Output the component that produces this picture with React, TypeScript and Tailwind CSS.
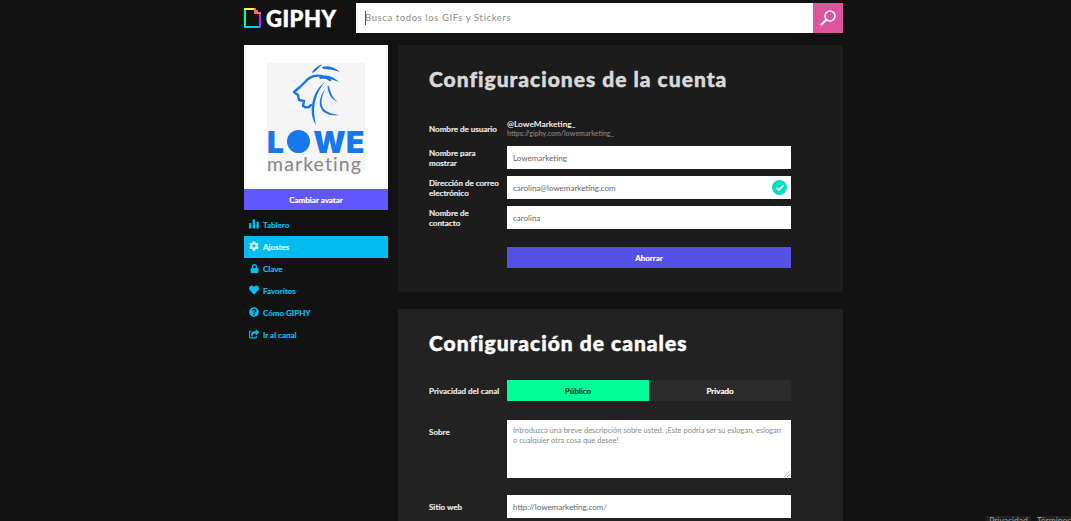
import React from 'react';
import { FaCog, FaLock, FaHeart, FaQuestionCircle, FaShareSquare } from 'react-icons/fa';
import { Check } from 'lucide-react';

const Bars = () => (
  <svg width="11" height="10" viewBox="0 0 11 10" fill="currentColor">
    <rect x="0" y="4" width="2.6" height="6" />
    <rect x="4" y="0" width="2.8" height="10" />
    <rect x="8.2" y="2.5" width="2.6" height="7.5" />
  </svg>
);

const navItems = [
  { label: 'Tablero', icon: <Bars /> },
  { label: 'Ajustes', icon: <FaCog size={10} />, active: true },
  { label: 'Clave', icon: <FaLock size={9} /> },
  { label: 'Favoritos', icon: <FaHeart size={10} /> },
  { label: 'Cómo GIPHY', icon: <FaQuestionCircle size={10} /> },
  { label: 'Ir al canal', icon: <FaShareSquare size={10} /> },
];

const GiphyMark = () => (
  <svg width="17" height="20" viewBox="0 0 17 20" className="shrink-0">
    <path d="M0 0h2v20H0z" fill="#00ff99" />
    <path d="M0 0h10v2H0z" fill="#fff35c" />
    <path d="M0 18h17v2H0z" fill="#00ccff" />
    <path d="M15 6h2v14h-2z" fill="#9933ff" />
    <path d="M10 0h2v2h2v2h3v2h-7z" fill="#ff6666" />
  </svg>
);

// lion head from the avatar: outline plus tapered mane strands
const Lion = () => (
  <svg width="98" height="64" viewBox="0 0 98 64" fill="#1877ec" className="shrink-0">
    <path d="M45 9c3-4 6-6 10-8-2 3-5 6-9 9z" />
    <path d="M55 4c7-2 12 0 18 5-6-2-11-3-17-3z" />
    <path d="M52 14c7-3 14-1 20 5-7-3-12-4-19-3z" />
    <path
      d="M63 17C53 10 44 12 38 19L33 24 27 29 31 32 32 37 37 38 36 43C39 45 42 45 44 42"
      fill="none"
      stroke="#1877ec"
      strokeWidth="2.4"
      strokeLinejoin="round"
      strokeLinecap="round"
    />
    <path d="M58 19c-7 8-10 17-11 27 0 6 1 11 2 16-4-6-5-13-4-19 1-11 6-19 13-24z" />
    <path d="M59 25c-4 7-6 14-3 20 3 4 9 6 16 7-8 1-14-1-17-5-5-7-1-16 4-22z" />
    <path d="M61 22c2 3 2 6 3 8 1 3 3 6 7 9-5-2-8-5-9-9-1-3-2-5-1-8z" />
  </svg>
);

const Row = ({ label, children, top }: { label: string; children: React.ReactNode; top?: boolean }) => (
  <div className={`flex ${top ? 'items-start' : 'items-center'}`}>
    <div className={`w-[78px] pr-[6px] text-[8px] leading-[10px] font-bold text-[#e4e4e4] [-webkit-text-stroke:0.2px] ${top ? 'pt-[7px]' : ''}`}>
      {label}
    </div>
    <div className="w-[284px]">{children}</div>
  </div>
);

const Field = ({ value, check }: { value: string; check?: boolean }) => (
  <div className="h-[23px] bg-white flex items-center justify-between pl-[6px] pr-[4px] text-[8px] text-[#666]">
    <span>{value}</span>
    {check && (
      <span className="w-[15px] h-[15px] rounded-full bg-[#00e0c0] flex items-center justify-center text-white">
        <Check size={10} strokeWidth={4} />
      </span>
    )}
  </div>
);

export default function App() {
  return (
    <div
      className="h-[521px] w-[1071px] overflow-hidden bg-[#121212] relative"
      style={{ fontFamily: 'Lato, "Liberation Sans", sans-serif' }}
    >
      <div className="w-[599px] ml-[244px] flex flex-col">
        <header className="h-[30px] mt-[3px] flex items-center">
          <GiphyMark />
          <span className="ml-[5px] w-[90px] text-[22px] font-black text-white tracking-[0.5px] [-webkit-text-stroke:0.5px]">GIPHY</span>
          <div className="w-[457px] h-[30px] bg-white flex items-center pl-[9px] text-[9.5px] tracking-[0.6px] text-[#8a8a8a] relative">
            <span className="absolute left-[9px] top-[8px] w-px h-[14px] bg-[#555]" />
            Busca todos los GIFs y Stickers
          </div>
          <div className="w-[30px] h-[30px] bg-[#dd549f] flex items-center justify-center">
            <svg width="18" height="18" viewBox="0 0 18 18" fill="none" stroke="#fff" strokeLinecap="round">
              <circle cx="11" cy="7" r="5" strokeWidth="1.6" />
              <path d="M7.3 10.8 2.5 15.5" strokeWidth="2.2" />
            </svg>
          </div>
        </header>

        <div className="flex mt-[12px] gap-[10px]">
          <aside className="w-[144px] shrink-0">
            <div className="h-[144px] bg-white flex items-center justify-center">
              <div className="w-[98px] h-[109px] bg-[#f5f5f5] flex flex-col">
                <Lion />
                <div
                  className="mt-[4px] h-[22px] flex items-center justify-between text-[30px] leading-[22px] font-black text-[#1877ec]"
                  style={{ fontFamily: 'Inter, sans-serif' }}
                >
                  <span>L</span>
                  <span className="w-[23px] h-[23px] rounded-full bg-[#1877ec] text-center text-[18px] leading-[23px]">O</span>
                  <span className="tracking-[0.5px]">WE</span>
                </div>
                <div className="text-[19.5px] leading-[19px] mt-[1px] text-[#888] tracking-[1.1px]">marketing</div>
              </div>
            </div>
            <div className="h-[21px] bg-[#6157ff] flex items-center justify-center text-[8px] font-bold text-white [-webkit-text-stroke:0.2px]">
              Cambiar avatar
            </div>
            <nav className="mt-[4px] flex flex-col">
              {navItems.map((item) => (
                <div
                  key={item.label}
                  className={`h-[22px] flex items-center pl-[5px] gap-[4px] text-[8px] font-bold [-webkit-text-stroke:0.2px] ${
                    item.active ? 'bg-[#00bcef] text-[#d8f6ff]' : 'text-[#00bfe8]'
                  }`}
                >
                  <span className="w-[10px] flex justify-center -mt-[2px]">{item.icon}</span>
                  {item.label}
                </div>
              ))}
            </nav>
          </aside>

          <main className="w-[445px] flex flex-col gap-[17px]">
            <section className="h-[247px] bg-[#1c1c1c] pl-[31px] pt-[20px]">
              <h1 className="text-[21px] leading-[28px] font-black text-[#d8d8d8] tracking-[1px] [-webkit-text-stroke:0.5px]">
                Configuraciones de la cuenta
              </h1>
              <div className="mt-[25px] flex flex-col gap-[7px]">
                <Row label="Nombre de usuario">
                  <div className="h-[21px] flex flex-col justify-center">
                    <div className="text-[8.3px] leading-[9px] font-bold text-[#eee]">@LoweMarketing_</div>
                    <div className="text-[7px] leading-[8px] font-bold text-[#777]">https://giphy.com/lowemarketing_</div>
                  </div>
                </Row>
                <Row label="Nombre para mostrar"><Field value="Lowemarketing" /></Row>
                <Row label="Dirección de correo electrónico"><Field value="carolina@lowemarketing.com" check /></Row>
                <Row label="Nombre de contacto"><Field value="carolina" /></Row>
              </div>
              <div className="ml-[78px] mt-[18px] w-[284px] h-[21px] bg-[#5650e4] flex items-center justify-center text-[8px] font-bold text-white [-webkit-text-stroke:0.2px]">
                Ahorrar
              </div>
            </section>

            <section className="h-[220px] bg-[#222222] pl-[31px] pt-[20px]">
              <h2 className="text-[21px] leading-[28px] font-black text-white tracking-[1px] [-webkit-text-stroke:0.5px]">
                Configuración de canales
              </h2>
              <div className="mt-[23px] flex flex-col">
                <Row label="Privacidad del canal">
                  <div className="flex h-[21px] text-[8px] font-bold [-webkit-text-stroke:0.2px]">
                    <div className="w-[142px] bg-[#00ff99] flex items-center justify-center text-[#0c3a28]">Público</div>
                    <div className="w-[142px] bg-[#2b2b2b] flex items-center justify-center text-white">Privado</div>
                  </div>
                </Row>
                <div className="mt-[19px]">
                  <Row label="Sobre" top>
                    <div className="h-[58px] bg-white pl-[6px] pr-[6px] pt-[6px] text-[7.5px] leading-[9.5px] text-[#8a8a8a] relative">
                      Introduzca una breve descripción sobre usted. ¡Este podría ser su eslogan, eslogan o cualquier otra cosa que desee!
                      <svg width="6" height="6" viewBox="0 0 6 6" className="absolute right-[1px] bottom-[1px]" stroke="#aaa" strokeWidth="0.7">
                        <path d="M0 6 6 0M3 6 6 3" />
                      </svg>
                    </div>
                  </Row>
                </div>
                <div className="mt-[17px]">
                  <Row label="Sitio web"><Field value="http://lowemarketing.com/" /></Row>
                </div>
              </div>
            </section>
          </main>
        </div>
      </div>

      {/* footer tabs peeking in at the bottom of the window */}
      <div className="absolute right-0 top-[516px] flex gap-[6px] text-[8.5px] leading-[10px] text-[#999]">
        <div className="w-[45px] h-[10px] bg-[#222] text-center">Privacidad</div>
        <div className="w-[34px] h-[10px] bg-[#222] text-center">Términos</div>
      </div>
    </div>
  );
}
